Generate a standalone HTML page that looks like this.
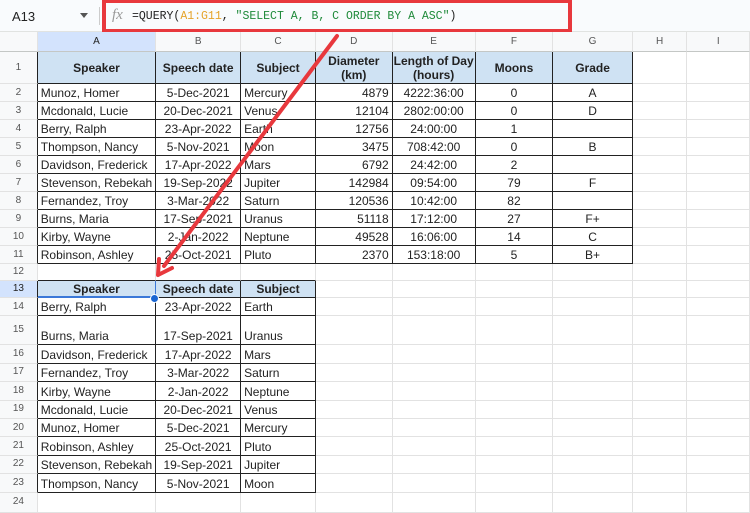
<!DOCTYPE html>
<html><head><style>
*{margin:0;padding:0;box-sizing:border-box}
body{width:750px;height:500px;overflow:hidden;background:#fff;font-family:"Liberation Sans",Arial,sans-serif;position:relative}
#bar{position:absolute;left:0;top:0;width:750px;height:32px;background:#f9fbfd;border-bottom:1px solid #e1e3e1}
#nm{position:absolute;left:12px;top:9px;font-size:13px;color:#222}
#dd{position:absolute;left:80px;top:13px;width:0;height:0;border-left:4px solid transparent;border-right:4px solid transparent;border-top:5px solid #555}
#sep{position:absolute;left:99px;top:7px;width:1px;height:18px;background:#ccc}
#fx{position:absolute;left:112px;top:7px;font-family:"Liberation Serif",serif;font-style:italic;color:#999;font-size:15px}
#f{position:absolute;left:132px;top:10px;font-family:"Liberation Mono",monospace;font-size:11.5px;color:#222;white-space:pre}
#box{position:absolute;left:102px;top:0;width:470px;height:33px;border:4px solid #e8383d;border-top-width:3px}
table{position:absolute;left:0;top:32px;border-collapse:separate;border-spacing:0;table-layout:fixed;font-size:12px;line-height:14px;color:#222}
td{border-right:1px solid #e2e2e2;border-bottom:1px solid #e2e2e2;padding:0 3px 1px;white-space:nowrap;overflow:hidden;vertical-align:bottom}
td.r{background:#f8f9fa;color:#555;font-size:10px;text-align:center;vertical-align:middle;padding:0}
tr.ch td{background:#f8f9fa;color:#555;font-size:10px;text-align:center;vertical-align:middle;padding:0;border-bottom:1px solid #c4c7c5}
tr.ch td.sel{background:#d3e3fd;color:#222}
td.h{background:#cfe2f3;font-weight:bold;text-align:center;vertical-align:middle;padding:0}
td.k{border-right:1px solid #222;border-bottom:1px solid #222}
td.kr{border-right:1px solid #222}
td.kb{border-bottom:1px solid #222}
.c{text-align:center}.rt{text-align:right}
td.r.s{background:#d3e3fd;color:#222}
tr.d{height:18px}
tr.e{height:18.4px}
</style></head><body>
<div id="bar"><div id="nm">A13</div><div id="dd"></div><div id="sep"></div><div id="fx">fx</div>
<div id="f">=QUERY(<span style="color:#e5a32a">A1:G11</span>, <span style="color:#1f8a3a">"SELECT A, B, C ORDER BY A ASC"</span>)</div></div>
<div id="box"></div>
<table>
<colgroup><col style="width:38px"><col style="width:116px"><col style="width:85px"><col style="width:75px"><col style="width:77px"><col style="width:83px"><col style="width:78px"><col style="width:80px"><col style="width:55px"><col style="width:63px"></colgroup>
<tr class="ch" style="height:20px"><td></td><td class="sel">A</td><td>B</td><td>C</td><td>D</td><td>E</td><td>F</td><td>G</td><td>H</td><td>I</td></tr>
<tr style="height:32px"><td class="r kr">1</td><td class="h k">Speaker</td><td class="h k">Speech date</td><td class="h k">Subject</td><td class="h k">Diameter<br>(km)</td><td class="h k">Length of Day<br>(hours)</td><td class="h k">Moons</td><td class="h k">Grade</td><td></td><td></td></tr>
<tr class="d"><td class="r kr">2</td><td class="k">Munoz, Homer</td><td class="k c">5-Dec-2021</td><td class="k">Mercury</td><td class="k rt">4879</td><td class="k c">4222:36:00</td><td class="k c">0</td><td class="k c">A</td><td></td><td></td></tr>
<tr class="d"><td class="r kr">3</td><td class="k">Mcdonald, Lucie</td><td class="k c">20-Dec-2021</td><td class="k">Venus</td><td class="k rt">12104</td><td class="k c">2802:00:00</td><td class="k c">0</td><td class="k c">D</td><td></td><td></td></tr>
<tr class="d"><td class="r kr">4</td><td class="k">Berry, Ralph</td><td class="k c">23-Apr-2022</td><td class="k">Earth</td><td class="k rt">12756</td><td class="k c">24:00:00</td><td class="k c">1</td><td class="k c"></td><td></td><td></td></tr>
<tr class="d"><td class="r kr">5</td><td class="k">Thompson, Nancy</td><td class="k c">5-Nov-2021</td><td class="k">Moon</td><td class="k rt">3475</td><td class="k c">708:42:00</td><td class="k c">0</td><td class="k c">B</td><td></td><td></td></tr>
<tr class="d"><td class="r kr">6</td><td class="k">Davidson, Frederick</td><td class="k c">17-Apr-2022</td><td class="k">Mars</td><td class="k rt">6792</td><td class="k c">24:42:00</td><td class="k c">2</td><td class="k c"></td><td></td><td></td></tr>
<tr class="d"><td class="r kr">7</td><td class="k">Stevenson, Rebekah</td><td class="k c">19-Sep-2022</td><td class="k">Jupiter</td><td class="k rt">142984</td><td class="k c">09:54:00</td><td class="k c">79</td><td class="k c">F</td><td></td><td></td></tr>
<tr class="d"><td class="r kr">8</td><td class="k">Fernandez, Troy</td><td class="k c">3-Mar-2022</td><td class="k">Saturn</td><td class="k rt">120536</td><td class="k c">10:42:00</td><td class="k c">82</td><td class="k c"></td><td></td><td></td></tr>
<tr class="d"><td class="r kr">9</td><td class="k">Burns, Maria</td><td class="k c">17-Sep-2021</td><td class="k">Uranus</td><td class="k rt">51118</td><td class="k c">17:12:00</td><td class="k c">27</td><td class="k c">F+</td><td></td><td></td></tr>
<tr class="d"><td class="r kr">10</td><td class="k">Kirby, Wayne</td><td class="k c">2-Jan-2022</td><td class="k">Neptune</td><td class="k rt">49528</td><td class="k c">16:06:00</td><td class="k c">14</td><td class="k c">C</td><td></td><td></td></tr>
<tr class="d"><td class="r kr">11</td><td class="k">Robinson, Ashley</td><td class="k c">25-Oct-2021</td><td class="k">Pluto</td><td class="k rt">2370</td><td class="k c">153:18:00</td><td class="k c">5</td><td class="k c">B+</td><td></td><td></td></tr>
<tr style="height:17px"><td class="r">12</td><td class="kb"></td><td class="kb"></td><td class="kb"></td><td></td><td></td><td></td><td></td><td></td><td></td></tr>
<tr style="height:17px"><td class="r s" style="border-right:1px solid #222">13</td><td class="h k" style="border-right:1px solid #3b78d8;border-bottom:2px solid #3b78d8">Speaker</td><td class="h k">Speech date</td><td class="h k">Subject</td><td></td><td></td><td></td><td></td><td></td><td></td></tr>
<tr class="e"><td class="r kr">14</td><td class="k">Berry, Ralph</td><td class="k c">23-Apr-2022</td><td class="k">Earth</td><td></td><td></td><td></td><td></td><td></td><td></td></tr>
<tr style="height:29px"><td class="r kr">15</td><td class="k">Burns, Maria</td><td class="k c">17-Sep-2021</td><td class="k">Uranus</td><td></td><td></td><td></td><td></td><td></td><td></td></tr>
<tr class="e"><td class="r kr">16</td><td class="k">Davidson, Frederick</td><td class="k c">17-Apr-2022</td><td class="k">Mars</td><td></td><td></td><td></td><td></td><td></td><td></td></tr>
<tr class="e"><td class="r kr">17</td><td class="k">Fernandez, Troy</td><td class="k c">3-Mar-2022</td><td class="k">Saturn</td><td></td><td></td><td></td><td></td><td></td><td></td></tr>
<tr class="e"><td class="r kr">18</td><td class="k">Kirby, Wayne</td><td class="k c">2-Jan-2022</td><td class="k">Neptune</td><td></td><td></td><td></td><td></td><td></td><td></td></tr>
<tr class="e"><td class="r kr">19</td><td class="k">Mcdonald, Lucie</td><td class="k c">20-Dec-2021</td><td class="k">Venus</td><td></td><td></td><td></td><td></td><td></td><td></td></tr>
<tr class="e"><td class="r kr">20</td><td class="k">Munoz, Homer</td><td class="k c">5-Dec-2021</td><td class="k">Mercury</td><td></td><td></td><td></td><td></td><td></td><td></td></tr>
<tr class="e"><td class="r kr">21</td><td class="k">Robinson, Ashley</td><td class="k c">25-Oct-2021</td><td class="k">Pluto</td><td></td><td></td><td></td><td></td><td></td><td></td></tr>
<tr class="e"><td class="r kr">22</td><td class="k">Stevenson, Rebekah</td><td class="k c">19-Sep-2021</td><td class="k">Jupiter</td><td></td><td></td><td></td><td></td><td></td><td></td></tr>
<tr class="e"><td class="r kr">23</td><td class="k">Thompson, Nancy</td><td class="k c">5-Nov-2021</td><td class="k">Moon</td><td></td><td></td><td></td><td></td><td></td><td></td></tr>
<tr style="height:20px"><td class="r">24</td><td></td><td></td><td></td><td></td><td></td><td></td><td></td><td></td><td></td></tr>
</table>
<div style="position:absolute;left:150px;top:294px;width:9px;height:9px;border-radius:50%;background:#1a66d2;border:1px solid #fff"></div>
<svg style="position:absolute;left:0;top:0" width="750" height="500">
<line x1="337" y1="36" x2="164" y2="266" stroke="#e8383d" stroke-width="4" stroke-linecap="round"/>
<path d="M158 275 L159 259 M158 275 L172 268" stroke="#e8383d" stroke-width="4" stroke-linecap="round" fill="none"/>
</svg>
</body></html>
